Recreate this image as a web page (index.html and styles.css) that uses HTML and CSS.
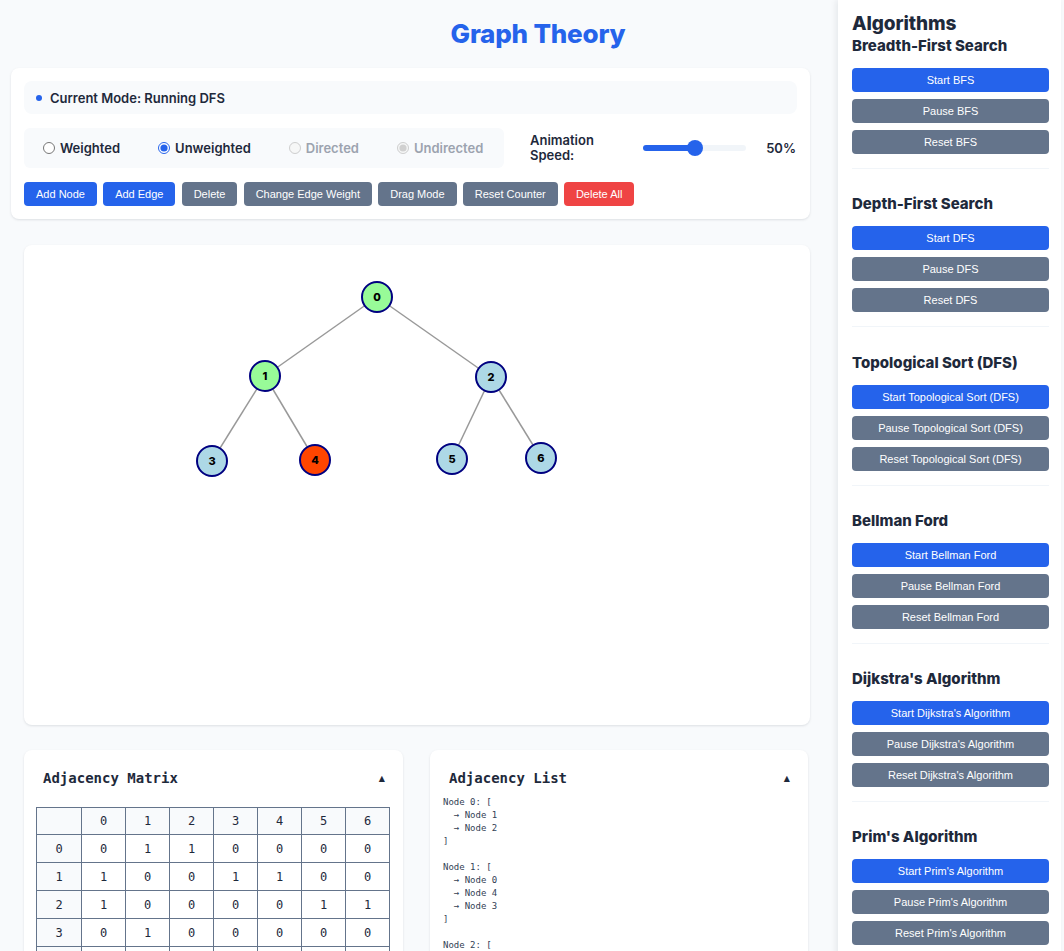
FILE: index.html
```html
<!DOCTYPE html>
<html lang="en">
<head>
<meta charset="utf-8">
<title>Graph Theory</title>
<link rel="stylesheet" href="styles.css">
</head>
<body>
<div class="page">
  <main class="main">
    <h1 class="title">Graph Theory</h1>

    <section class="card controls">
      <div class="mode-bar"><span class="mode-dot"></span><span>Current Mode: Running DFS</span></div>
      <div class="options-row">
        <div class="radio-group">
          <label class="radio"><input type="radio" name="w"><span>Weighted</span></label>
          <label class="radio"><input type="radio" name="w" checked><span>Unweighted</span></label>
          <label class="radio disabled"><input type="radio" name="d" disabled><span>Directed</span></label>
          <label class="radio disabled"><input type="radio" name="d" disabled checked><span>Undirected</span></label>
        </div>
        <div class="speed">
          <span class="speed-label">Animation Speed:</span>
          <input class="slider" type="range" min="0" max="100" value="50">
          <span class="speed-value">50%</span>
        </div>
      </div>
      <div class="toolbar">
        <button class="btn blue">Add Node</button>
        <button class="btn blue">Add Edge</button>
        <button class="btn gray">Delete</button>
        <button class="btn gray">Change Edge Weight</button>
        <button class="btn gray">Drag Mode</button>
        <button class="btn gray">Reset Counter</button>
        <button class="btn red">Delete All</button>
      </div>
    </section>

    <section class="card canvas">
      <svg class="graph" width="786" height="480" viewBox="0 0 786 480">
        <g class="edges">
          <line x1="353" y1="52" x2="241" y2="131"/>
          <line x1="353" y1="52" x2="467" y2="132"/>
          <line x1="241" y1="131" x2="188" y2="216"/>
          <line x1="241" y1="131" x2="291" y2="215"/>
          <line x1="467" y1="132" x2="428" y2="214"/>
          <line x1="467" y1="132" x2="517" y2="213"/>
        </g>
        <g class="nodes">
          <circle class="visited" cx="353" cy="52" r="15"/><text x="353" y="52">0</text>
          <circle class="visited" cx="241" cy="131" r="15"/><text x="241" y="131">1</text>
          <circle class="idle" cx="467" cy="132" r="15"/><text x="467" y="132">2</text>
          <circle class="idle" cx="188" cy="216" r="15"/><text x="188" y="216">3</text>
          <circle class="current" cx="291" cy="215" r="15"/><text x="291" y="215">4</text>
          <circle class="idle" cx="428" cy="214" r="15"/><text x="428" y="214">5</text>
          <circle class="idle" cx="517" cy="213" r="15"/><text x="517" y="213">6</text>
        </g>
      </svg>
    </section>

    <div class="panels">
      <section class="card panel">
        <div class="panel-head"><span>Adjacency Matrix</span><span class="caret">&#9650;</span></div>
        <table class="matrix">
          <thead>
            <tr><th></th><th>0</th><th>1</th><th>2</th><th>3</th><th>4</th><th>5</th><th>6</th></tr>
          </thead>
          <tbody>
            <tr><th>0</th><td>0</td><td>1</td><td>1</td><td>0</td><td>0</td><td>0</td><td>0</td></tr>
            <tr><th>1</th><td>1</td><td>0</td><td>0</td><td>1</td><td>1</td><td>0</td><td>0</td></tr>
            <tr><th>2</th><td>1</td><td>0</td><td>0</td><td>0</td><td>0</td><td>1</td><td>1</td></tr>
            <tr><th>3</th><td>0</td><td>1</td><td>0</td><td>0</td><td>0</td><td>0</td><td>0</td></tr>
            <tr><th>4</th><td>0</td><td>1</td><td>0</td><td>0</td><td>0</td><td>0</td><td>0</td></tr>
            <tr><th>5</th><td>0</td><td>0</td><td>1</td><td>0</td><td>0</td><td>0</td><td>0</td></tr>
            <tr><th>6</th><td>0</td><td>0</td><td>1</td><td>0</td><td>0</td><td>0</td><td>0</td></tr>
          </tbody>
        </table>
      </section>
      <section class="card panel list-panel">
        <div class="panel-head list-head"><span>Adjacency List</span><span class="caret">&#9650;</span></div>
<pre class="adj-list">Node 0: [
  → Node 1
  → Node 2
]

Node 1: [
  → Node 0
  → Node 4
  → Node 3
]

Node 2: [
  → Node 0
  → Node 5
  → Node 6
]

Node 3: [
  → Node 1
]

Node 4: [
  → Node 1
]

Node 5: [
  → Node 2
]

Node 6: [
  → Node 2
]</pre>
      </section>
    </div>
  </main>

  <aside class="sidebar">
    <h2 class="side-title">Algorithms</h2>
    <div class="algo">
      <h3>Breadth-First Search</h3>
      <button class="sbtn blue">Start BFS</button>
      <button class="sbtn gray">Pause BFS</button>
      <button class="sbtn gray">Reset BFS</button>
    </div>
    <div class="algo">
      <h3>Depth-First Search</h3>
      <button class="sbtn blue">Start DFS</button>
      <button class="sbtn gray">Pause DFS</button>
      <button class="sbtn gray">Reset DFS</button>
    </div>
    <div class="algo">
      <h3>Topological Sort (DFS)</h3>
      <button class="sbtn blue">Start Topological Sort (DFS)</button>
      <button class="sbtn gray">Pause Topological Sort (DFS)</button>
      <button class="sbtn gray">Reset Topological Sort (DFS)</button>
    </div>
    <div class="algo">
      <h3>Bellman Ford</h3>
      <button class="sbtn blue">Start Bellman Ford</button>
      <button class="sbtn gray">Pause Bellman Ford</button>
      <button class="sbtn gray">Reset Bellman Ford</button>
    </div>
    <div class="algo">
      <h3>Dijkstra's Algorithm</h3>
      <button class="sbtn blue">Start Dijkstra's Algorithm</button>
      <button class="sbtn gray">Pause Dijkstra's Algorithm</button>
      <button class="sbtn gray">Reset Dijkstra's Algorithm</button>
    </div>
    <div class="algo">
      <h3>Prim's Algorithm</h3>
      <button class="sbtn blue">Start Prim's Algorithm</button>
      <button class="sbtn gray">Pause Prim's Algorithm</button>
      <button class="sbtn gray">Reset Prim's Algorithm</button>
    </div>
  </aside>
</div>
</body>
</html>
```

FILE: styles.css
```css
* { box-sizing: border-box; }

body {
  margin: 0;
  background: #f8fafc;
  font-family: Inter, "Noto Sans", sans-serif;
  color: #1e293b;
}

.page {
  display: flex;
  width: 1064px;
  min-height: 951px;
}

.main {
  width: 838px;
  flex: none;
  padding: 0 28px 40px 0;
}

.title {
  margin: 19px 0 19px 0;
  padding-left: 266px;
  text-align: center;
  font-size: 26px;
  line-height: 30px;
  font-weight: 800;
  color: #2563eb;
  letter-spacing: -0.2px;
}

.card {
  background: #ffffff;
  border-radius: 8px;
  box-shadow: 0 1px 3px rgba(15, 23, 42, 0.08), 0 1px 2px rgba(15, 23, 42, 0.04);
}

.controls {
  margin-left: 11px;
  padding: 13px;
  display: flex;
  flex-direction: column;
  gap: 14px;
}

.mode-bar {
  height: 33px;
  background: #f8fafc;
  border-radius: 8px;
  display: flex;
  align-items: center;
  gap: 8px;
  padding-left: 12px;
  font-size: 13px;
  font-weight: 600;
}

.mode-dot {
  width: 6px;
  height: 6px;
  border-radius: 50%;
  background: #2563eb;
}

.options-row {
  display: flex;
  align-items: center;
  gap: 26px;
}

.radio-group {
  width: 480px;
  height: 40px;
  background: #f8fafc;
  border-radius: 6px;
  display: flex;
  align-items: center;
  gap: 38px;
  padding: 0 19px;
}

.radio {
  display: flex;
  align-items: center;
  gap: 5px;
  font-size: 13px;
  font-weight: 600;
  color: #1e293b;
}

.radio input {
  margin: 0;
  width: 12px;
  height: 12px;
  accent-color: #2563eb;
}

.radio.disabled { color: #9ca3af; }

.speed {
  display: flex;
  align-items: center;
  flex: 1;
}

.speed-label {
  width: 113px;
  font-size: 13px;
  font-weight: 600;
  line-height: 15px;
  padding-right: 40px;
}

.slider {
  -webkit-appearance: none;
  appearance: none;
  width: 103px;
  height: 6px;
  margin: 0;
  border-radius: 3px;
  background: linear-gradient(to right, #2563eb 0%, #2563eb 50%, #f1f5f9 50%, #f1f5f9 100%);
  outline: none;
}

.slider::-webkit-slider-thumb {
  -webkit-appearance: none;
  width: 16px;
  height: 16px;
  border-radius: 50%;
  background: #2563eb;
  border: none;
}

.speed-value {
  margin-left: auto;
  padding-right: 1px;
  font-size: 13px;
  font-weight: 600;
}

.toolbar {
  display: flex;
  gap: 6.2px;
}

.btn {
  height: 24px;
  padding: 0 12px;
  border: none;
  border-radius: 4px;
  font-family: "Liberation Sans", Arial, sans-serif;
  font-size: 11px;
  color: #ffffff;
}

.blue { background: #2563eb; color: #ffffff; }
.gray { background: #64748b; color: #ffffff; }
.red { background: #ef4444; color: #ffffff; }

.canvas {
  margin: 26px 0 0 24px;
  height: 480px;
  width: 786px;
}

.graph { display: block; }

.edges line {
  stroke: #999999;
  stroke-width: 1.5;
}

.nodes circle {
  stroke: #000080;
  stroke-width: 2;
}

.nodes .visited { fill: #98fb98; }
.nodes .idle { fill: #add8e6; }
.nodes .current { fill: #ff4500; }

.nodes text {
  font-family: Inter, "Noto Sans", sans-serif;
  font-size: 11px;
  font-weight: 800;
  fill: #000000;
  text-anchor: middle;
  dominant-baseline: central;
}

.panels {
  margin: 25px 0 0 24px;
  display: grid;
  grid-template-columns: 379px 378px;
  gap: 27px;
  align-items: start;
}

.panel {
  padding: 12px 12px 14px;
}

.panel-head {
  display: flex;
  justify-content: space-between;
  align-items: center;
  height: 32px;
  padding: 0 6px 0 7px;
  margin-bottom: 13px;
  font-family: "DejaVu Sans Mono", monospace;
  font-size: 14px;
  font-weight: 700;
  color: #1e293b;
}

.caret {
  font-family: "DejaVu Sans", sans-serif;
  font-size: 8px;
}

.matrix {
  width: 354px;
  table-layout: fixed;
  border-collapse: collapse;
  font-family: "DejaVu Sans Mono", monospace;
  font-size: 12px;
  color: #1e293b;
}

.matrix th,
.matrix td {
  border: 1px solid #64748b;
  text-align: center;
  font-weight: 400;
  height: 28px;
  padding: 0;
}

.matrix thead th {
  height: 27px;
  background: #f8fafc;
}

.matrix thead th:first-child { width: 45px; }

.matrix tbody th { background: #f8fafc; }

.list-panel { padding-left: 13px; }

.list-head {
  padding-left: 6px;
  margin-bottom: 2px;
}

.adj-list {
  margin: 0;
  font-family: "DejaVu Sans Mono", monospace;
  font-size: 9px;
  line-height: 13px;
  color: #334155;
}

.sidebar {
  width: 223px;
  flex: none;
  background: #ffffff;
  box-shadow: -2px 0 6px rgba(15, 23, 42, 0.08);
  padding: 13px 12px 20px 14px;
}

.side-title {
  margin: 0;
  font-size: 19px;
  line-height: 22px;
  font-weight: 800;
  color: #1e293b;
  letter-spacing: -0.1px;
}

.algo {
  display: flex;
  flex-direction: column;
  gap: 7px;
  padding-bottom: 14px;
  border-bottom: 1px solid #f1f5f9;
  margin-bottom: 24.3px;
}

.algo h3 {
  margin: 0 0 5px;
  padding-top: 1px;
  font-size: 15px;
  line-height: 20px;
  font-weight: 800;
  color: #1e293b;
}

.sbtn {
  height: 24px;
  width: 100%;
  border: none;
  border-radius: 4px;
  font-family: "Liberation Sans", Arial, sans-serif;
  font-size: 11px;
}
```
